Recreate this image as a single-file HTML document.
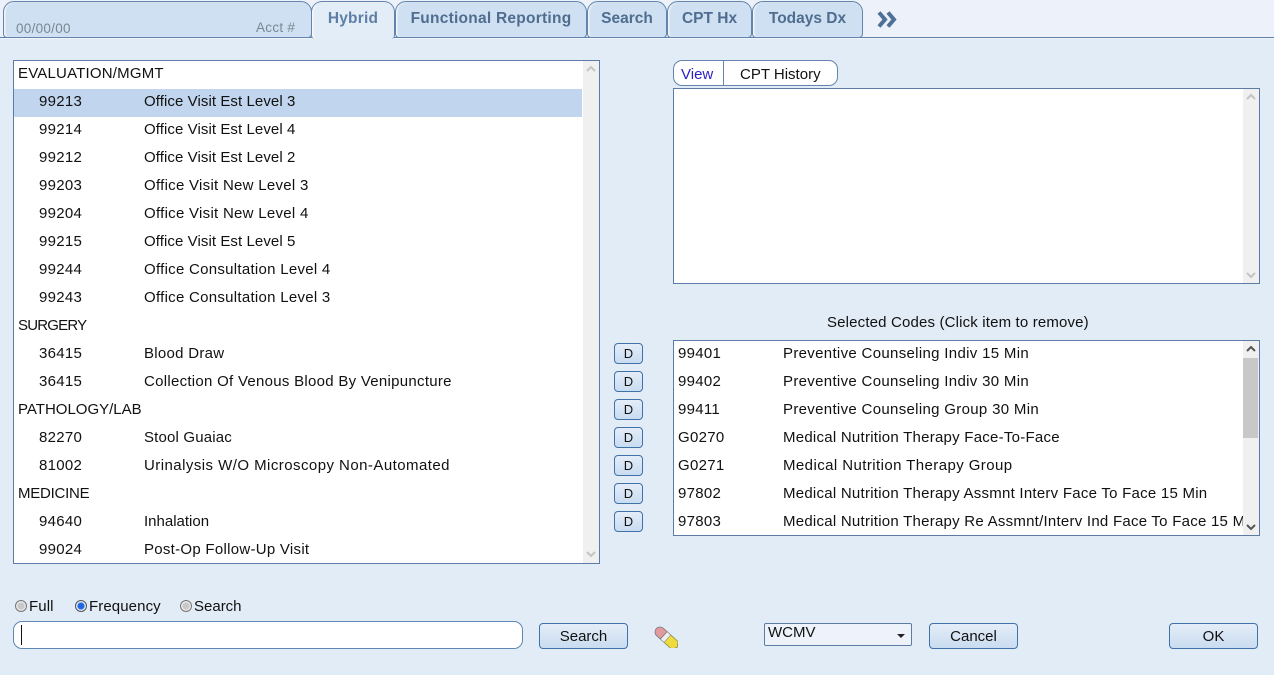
<!DOCTYPE html>
<html><head><meta charset="utf-8"><style>
html,body{margin:0;padding:0}
body{width:1274px;height:675px;background:#e2ecf7;position:relative;overflow:hidden;font:15px "Liberation Sans",sans-serif;color:#111}
div{position:absolute;box-sizing:border-box}
.t{white-space:nowrap;line-height:20px;height:20px;letter-spacing:.28px;margin-top:1px}
.tab{top:1px;height:37px;background:#cfe0f2;border:1px solid #6485ab;border-radius:11px 11px 4px 4px;font-weight:bold;color:#4f6d8f;text-align:center;line-height:34px;font-size:15.5px;letter-spacing:0;box-shadow:inset 2px 0 2px -1px #fff}
.box{background:#fff;border:1px solid #5b7da5}
.sb{background:#f0f0f0}
.btn{border:1px solid #3f72a8;border-radius:4px;background:linear-gradient(#e4edf8,#c9dcf0);text-align:center;color:#111;line-height:25px}
.d{left:614px;width:29px;height:21px;line-height:19px;font-size:13px;border-radius:4px}
.r{width:12px;height:12px;border-radius:50%;border:1px solid #777;background:radial-gradient(circle,#c8c8c8 0 3px,#e8e8e8 4px)}
</style></head><body>
<div style="left:0;top:0;width:1274px;height:37px;background:#edf2fa"></div>
<div style="left:0;top:37px;width:1274px;height:1px;background:#5f80a8"></div>
<div style="left:0;top:38px;width:1274px;height:1px;background:#f0f5fb"></div>
<div class="tab" style="left:3px;width:309px"></div>
<div class="t" style="left:16px;top:18px;color:#7a8794;font-size:13.5px">00/00/00</div>
<div class="t" style="left:256px;top:17px;color:#7a8794;font-size:13.5px">Acct #</div>
<div class="tab" style="left:311px;width:84px;height:38px;background:#e3edf8;border-bottom:none;color:#5d7fa6;letter-spacing:.2px">Hybrid</div>
<div class="tab" style="left:395px;width:192px;letter-spacing:.25px">Functional Reporting</div>
<div class="tab" style="left:587px;width:80px">Search</div>
<div class="tab" style="left:667px;width:85px">CPT Hx</div>
<div class="tab" style="left:752px;width:111px">Todays Dx</div>
<svg style="position:absolute;left:877px;top:11px" width="22" height="17"><path d="M2 1.5L8 8.5L2 15.5M11 1.5L17 8.5L11 15.5" fill="none" stroke="#4f7097" stroke-width="4"/></svg>

<div class="box" style="left:13px;top:60px;width:587px;height:504px"></div>
<div class="sb" style="left:583px;top:61px;width:16px;height:502px"></div>
<svg style="position:absolute;left:585px;top:64px" width="12" height="496"><path d="M2 7L6 3L10 7" fill="none" stroke="#c4c4c4" stroke-width="2"/><path d="M2 488L6 492L10 488" fill="none" stroke="#c4c4c4" stroke-width="2"/></svg>
<div style="left:14px;top:89px;width:568px;height:28px;background:#c1d6ee"></div>
<div class="t" style="left:18px;top:63px;letter-spacing:.2px">EVALUATION/MGMT</div>
<div class="t" style="left:39px;top:91px">99213</div><div class="t" style="left:144px;top:91px;letter-spacing:.08px">Office Visit Est Level 3</div>
<div class="t" style="left:39px;top:119px">99214</div><div class="t" style="left:144px;top:119px;letter-spacing:.08px">Office Visit Est Level 4</div>
<div class="t" style="left:39px;top:147px">99212</div><div class="t" style="left:144px;top:147px;letter-spacing:.08px">Office Visit Est Level 2</div>
<div class="t" style="left:39px;top:175px">99203</div><div class="t" style="left:144px;top:175px">Office Visit New Level 3</div>
<div class="t" style="left:39px;top:203px">99204</div><div class="t" style="left:144px;top:203px">Office Visit New Level 4</div>
<div class="t" style="left:39px;top:231px">99215</div><div class="t" style="left:144px;top:231px;letter-spacing:.08px">Office Visit Est Level 5</div>
<div class="t" style="left:39px;top:259px">99244</div><div class="t" style="left:144px;top:259px">Office Consultation Level 4</div>
<div class="t" style="left:39px;top:287px">99243</div><div class="t" style="left:144px;top:287px">Office Consultation Level 3</div>
<div class="t" style="left:18px;top:315px;letter-spacing:-.8px">SURGERY</div>
<div class="t" style="left:39px;top:343px">36415</div><div class="t" style="left:144px;top:343px">Blood Draw</div>
<div class="t" style="left:39px;top:371px">36415</div><div class="t" style="left:144px;top:371px">Collection Of Venous Blood By Venipuncture</div>
<div class="t" style="left:18px;top:399px;letter-spacing:0">PATHOLOGY/LAB</div>
<div class="t" style="left:39px;top:427px">82270</div><div class="t" style="left:144px;top:427px;letter-spacing:.17px">Stool Guaiac</div>
<div class="t" style="left:39px;top:455px">81002</div><div class="t" style="left:144px;top:455px;letter-spacing:.45px">Urinalysis W/O Microscopy Non-Automated</div>
<div class="t" style="left:18px;top:483px;letter-spacing:-.25px">MEDICINE</div>
<div class="t" style="left:39px;top:511px">94640</div><div class="t" style="left:144px;top:511px;letter-spacing:0">Inhalation</div>
<div class="t" style="left:39px;top:539px">99024</div><div class="t" style="left:144px;top:539px">Post-Op Follow-Up Visit</div>

<div class="btn d" style="top:343px">D</div>
<div class="btn d" style="top:371px">D</div>
<div class="btn d" style="top:399px">D</div>
<div class="btn d" style="top:427px">D</div>
<div class="btn d" style="top:455px">D</div>
<div class="btn d" style="top:483px">D</div>
<div class="btn d" style="top:511px">D</div>

<div style="left:673px;top:60px;width:165px;height:26px;background:#fff;border:1px solid #6485ab;border-radius:9px"></div>
<div style="left:723px;top:60px;width:1px;height:26px;background:#6485ab"></div>
<div class="t" style="left:681px;top:64px;color:#2a1fc4;letter-spacing:0">View</div>
<div class="t" style="left:740px;top:64px;letter-spacing:0">CPT History</div>
<div class="box" style="left:673px;top:88px;width:587px;height:196px"></div>
<div class="sb" style="left:1243px;top:89px;width:16px;height:194px"></div>
<svg style="position:absolute;left:1245px;top:92px" width="12" height="188"><path d="M2 7L6 3L10 7" fill="none" stroke="#c4c4c4" stroke-width="2"/><path d="M2 181L6 185L10 181" fill="none" stroke="#c4c4c4" stroke-width="2"/></svg>

<div class="t" style="left:827px;top:312px;letter-spacing:.16px">Selected Codes (Click item to remove)</div>
<div class="box" style="left:673px;top:340px;width:587px;height:196px"></div>
<div class="t" style="left:678px;top:343px">99401</div><div class="t" style="left:783px;top:343px;letter-spacing:.32px">Preventive Counseling Indiv 15 Min</div>
<div class="t" style="left:678px;top:371px">99402</div><div class="t" style="left:783px;top:371px;letter-spacing:.32px">Preventive Counseling Indiv 30 Min</div>
<div class="t" style="left:678px;top:399px">99411</div><div class="t" style="left:783px;top:399px;letter-spacing:.32px">Preventive Counseling Group 30 Min</div>
<div class="t" style="left:678px;top:427px">G0270</div><div class="t" style="left:783px;top:427px;letter-spacing:.25px">Medical Nutrition Therapy Face-To-Face</div>
<div class="t" style="left:678px;top:455px">G0271</div><div class="t" style="left:783px;top:455px;letter-spacing:.42px">Medical Nutrition Therapy Group</div>
<div class="t" style="left:678px;top:483px">97802</div><div class="t" style="left:783px;top:483px;letter-spacing:.25px">Medical Nutrition Therapy Assmnt Interv Face To Face 15 Min</div>
<div class="t" style="left:678px;top:511px">97803</div><div class="t" style="left:783px;top:511px;letter-spacing:.25px">Medical Nutrition Therapy Re Assmnt/Interv Ind Face To Face 15 Min</div>
<div class="sb" style="left:1243px;top:341px;width:16px;height:194px"></div>
<div style="left:1243px;top:358px;width:15px;height:80px;background:#c8c8c8"></div>
<svg style="position:absolute;left:1245px;top:344px" width="12" height="188"><path d="M2 7L6 3L10 7" fill="none" stroke="#555" stroke-width="2"/><path d="M2 181L6 185L10 181" fill="none" stroke="#555" stroke-width="2"/></svg>

<div class="r" style="left:15px;top:600px"></div><div class="t" style="left:29px;top:596px;letter-spacing:.1px">Full</div>
<div class="r" style="left:75px;top:600px;border-color:#555;background:radial-gradient(circle,#1f66e0 0 3px,#dfe8f4 4px)"></div><div class="t" style="left:89px;top:596px;letter-spacing:.1px">Frequency</div>
<div class="r" style="left:180px;top:600px"></div><div class="t" style="left:194px;top:596px;letter-spacing:0">Search</div>
<div style="left:13px;top:621px;width:510px;height:28px;background:#fff;border:1px solid #5f88b5;border-radius:9px"></div>
<div style="left:21px;top:625px;width:1px;height:20px;background:#111"></div>
<div class="btn" style="left:539px;top:623px;width:89px;height:26px">Search</div>
<svg style="position:absolute;left:654px;top:626px" width="24" height="22"><g transform="translate(6,6) rotate(42)"><path d="M6 -5H20L23 0L20 5H6Z" fill="#efdc3c" stroke="#8f8a50" stroke-width=".8"/><rect x="4" y="-5" width="6" height="10" fill="#eeeeee" stroke="#888" stroke-width=".6"/><path d="M5 -5H0A5 5 0 0 0 0 5H5Z" fill="#e39a9e" stroke="#777" stroke-width=".8"/></g></svg>
<div style="left:764px;top:623px;width:148px;height:23px;background:#edf2fb;border:1px solid #5b7da5;border-radius:2px"></div>
<div class="t" style="left:768px;top:622px;letter-spacing:0">WCMV</div>
<div style="left:897px;top:634px;width:0;height:0;border:4px solid transparent;border-top:4px solid #222;border-bottom:0"></div>
<div class="btn" style="left:929px;top:623px;width:89px;height:26px">Cancel</div>
<div class="btn" style="left:1169px;top:623px;width:89px;height:26px">OK</div>
</body></html>
